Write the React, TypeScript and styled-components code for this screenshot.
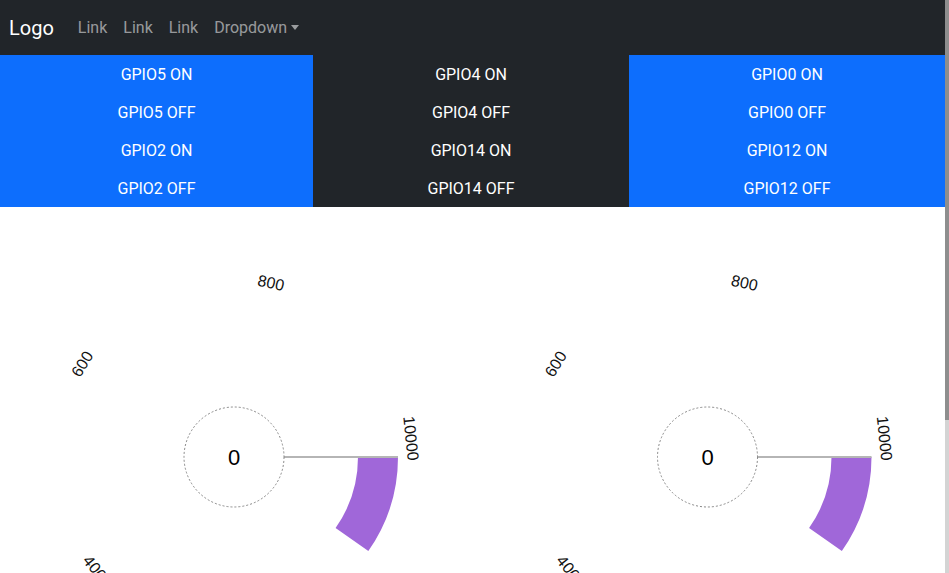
import React from 'react'
import styled, { createGlobalStyle } from 'styled-components'

const GlobalStyle = createGlobalStyle`
  html, body {
    margin: 0;
    padding: 0;
    background: #fff;
    font-family: Roboto, "Liberation Sans", sans-serif;
  }
`

const Page = styled.div`
  width: 945px;
  min-height: 782px;
`

// headless screenshots hide the real scrollbar, so draw the one the reference shows
const ScrollTrack = styled.div`
  position: fixed;
  top: 0;
  right: 0;
  width: 4px;
  height: 100vh;
  background: #d4d4d4;
`

const ScrollThumb = styled.div`
  height: 420px;
  background: #8e8e8e;
`

const Navbar = styled.nav`
  display: flex;
  align-items: center;
  height: 55px;
  padding: 0 9px;
  background: #212529;
`

const Brand = styled.a`
  font-size: 20px;
  color: #fff;
  margin-right: 16px;
  text-decoration: none;
`

const NavLink = styled.a`
  display: flex;
  align-items: center;
  padding: 8px;
  font-size: 16px;
  color: rgba(255, 255, 255, 0.55);
  text-decoration: none;
`

const Caret = styled.span`
  display: inline-block;
  margin-left: 4px;
  border-top: 5px solid rgba(255, 255, 255, 0.55);
  border-left: 4px solid transparent;
  border-right: 4px solid transparent;
`

const ButtonGrid = styled.div`
  display: grid;
  grid-template-columns: 313px 316px 1fr;
`

const ButtonColumn = styled.div<{ $dark?: boolean }>`
  display: flex;
  flex-direction: column;
  background: ${p => (p.$dark ? '#212529' : '#0d6efd')};
`

const GpioButton = styled.button`
  height: 38px;
  padding: 2px 0 0;
  border: none;
  background: transparent;
  color: #fff;
  font-family: Roboto, sans-serif;
  font-size: 16px;
  line-height: 24px;
  cursor: pointer;
`

const GaugeRow = styled.div`
  display: grid;
  grid-template-columns: 1fr 1fr;
`

const GaugeCell = styled.div`
  height: 500px;
  overflow: hidden;
`

const columns = [
  { dark: false, pins: [5, 2] },
  { dark: true, pins: [4, 14] },
  { dark: false, pins: [0, 12] },
]

const CY = 250
const LABEL_R = 178

const labels = [
  { text: '10000', angle: -6 },
  { text: '800', angle: -78 },
  { text: '600', angle: -148.5 },
  { text: '400', angle: -218.5 },
  { text: '200', angle: -288 },
]

const rad = (d: number) => (d * Math.PI) / 180

const arcPath = (cx: number, r1: number, r2: number, a0: number, a1: number) => {
  const p = (r: number, a: number) =>
    `${cx + r * Math.cos(rad(a))} ${CY + r * Math.sin(rad(a))}`
  return `M ${p(r2, a0)} A ${r2} ${r2} 0 0 1 ${p(r2, a1)} L ${p(
    r1,
    a1
  )} A ${r1} ${r1} 0 0 0 ${p(r1, a0)} Z`
}

const Gauge = ({ cx }: { cx: number }) => (
  <svg width="472" height="500" viewBox="0 0 472 500">
    {labels.map(l => {
      const x = cx + LABEL_R * Math.cos(rad(l.angle))
      const y = CY + LABEL_R * Math.sin(rad(l.angle))
      let rot = l.angle + 90
      const norm = ((rot % 360) + 360) % 360
      if (norm > 90 && norm < 270) rot -= 180
      return (
        <text
          key={l.text}
          x={x}
          y={y}
          transform={`rotate(${rot} ${x} ${y})`}
          textAnchor="middle"
          dominantBaseline="central"
          fontFamily="Liberation Sans, Arial, sans-serif"
          fontSize="16"
          fill="#111"
        >
          {l.text}
        </text>
      )
    })}
    <path d={arcPath(cx, 124, 164, 0, 35)} fill="#a067d9" />
    <line x1={cx + 50} y1={CY} x2={cx + 164} y2={CY} stroke="#b5b5b5" strokeWidth="2" />
    <circle
      cx={cx}
      cy={CY}
      r="50"
      fill="none"
      stroke="#888"
      strokeWidth="1"
      strokeDasharray="2 2"
    />
    <text
      x={cx}
      y={CY}
      textAnchor="middle"
      dominantBaseline="central"
      fontFamily="Liberation Sans, Arial, sans-serif"
      fontSize="22"
      fill="#000"
    >
      0
    </text>
  </svg>
)

export default function App() {
  return (
    <Page>
      <GlobalStyle />
      <Navbar>
        <Brand href="#">Logo</Brand>
        <NavLink href="#">Link</NavLink>
        <NavLink href="#">Link</NavLink>
        <NavLink href="#">Link</NavLink>
        <NavLink href="#">
          Dropdown
          <Caret />
        </NavLink>
      </Navbar>
      <ButtonGrid>
        {columns.map((col, i) => (
          <ButtonColumn key={i} $dark={col.dark}>
            {col.pins.flatMap(pin => [
              <GpioButton key={pin + 'on'}>GPIO{pin} ON</GpioButton>,
              <GpioButton key={pin + 'off'}>GPIO{pin} OFF</GpioButton>,
            ])}
          </ButtonColumn>
        ))}
      </ButtonGrid>
      <GaugeRow>
        <GaugeCell>
          <Gauge cx={234} />
        </GaugeCell>
        <GaugeCell>
          <Gauge cx={234.5} />
        </GaugeCell>
      </GaugeRow>
      <ScrollTrack>
        <ScrollThumb />
      </ScrollTrack>
    </Page>
  )
}
